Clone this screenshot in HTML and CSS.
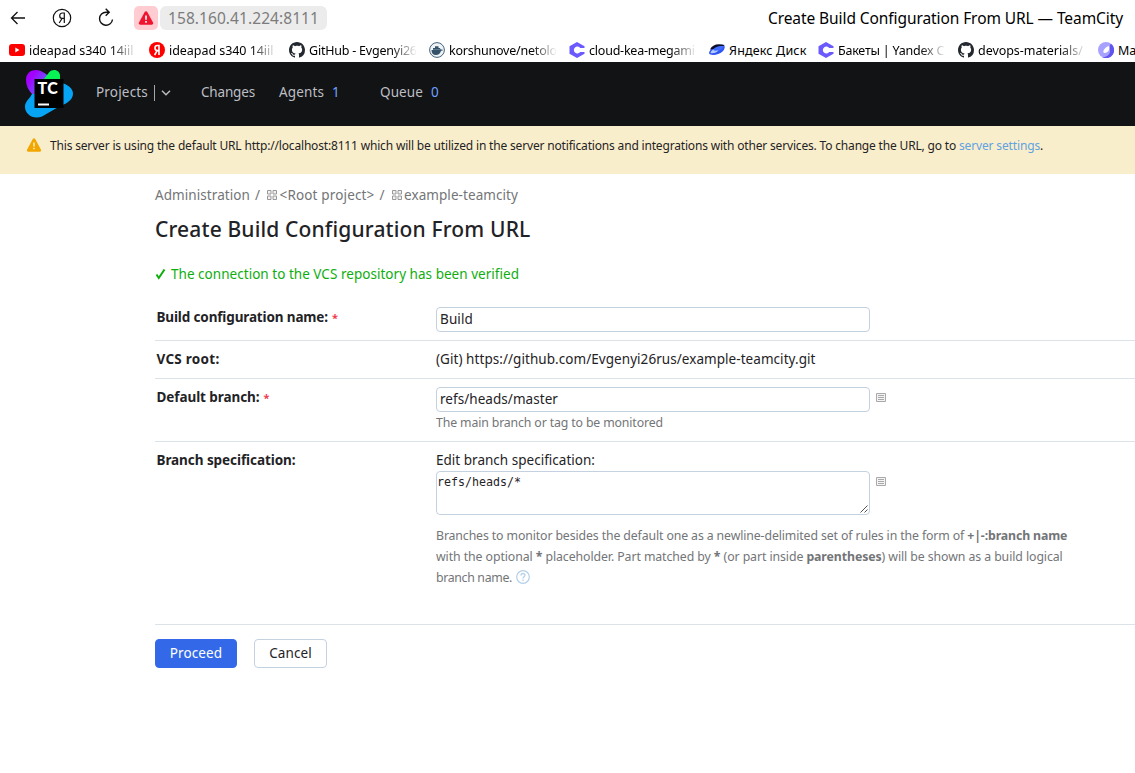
FILE: index.html
```html
<!DOCTYPE html>
<html lang="en">
<head>
<meta charset="utf-8">
<title>Create Build Configuration From URL — TeamCity</title>
<link rel="stylesheet" href="styles.css">
</head>
<body>
<svg class="defs" width="0" height="0">
  <symbol id="github" viewBox="0 0 16 16"><path fill="#24292f" d="M8 0C3.58 0 0 3.58 0 8c0 3.54 2.29 6.53 5.47 7.59.4.07.55-.17.55-.38 0-.19-.01-.82-.01-1.49-2.01.37-2.53-.49-2.69-.94-.09-.23-.48-.94-.82-1.13-.28-.15-.68-.52-.01-.53.63-.01 1.08.58 1.23.82.72 1.21 1.87.87 2.33.66.07-.52.28-.87.51-1.07-1.78-.2-3.64-.89-3.64-3.95 0-.87.31-1.59.82-2.15-.08-.2-.36-1.02.08-2.12 0 0 .67-.21 2.2.82.64-.18 1.32-.27 2-.27s1.36.09 2 .27c1.53-1.04 2.2-.82 2.2-.82.44 1.1.16 1.92.08 2.12.51.56.82 1.27.82 2.15 0 3.07-1.87 3.75-3.65 3.95.29.25.54.73.54 1.48 0 1.07-.01 1.93-.01 2.2 0 .21.15.46.55.38A8.01 8.01 0 0 0 16 8c0-4.42-3.58-8-8-8z"/></symbol>
  <symbol id="cloud" viewBox="0 0 16 16"><path fill="#6b5bff" d="M8 0l7.500 4.200V6h-4.300A3.500 3.500 0 1 0 11.200 10h4.300v1.800L8 16 .5 11.800V4.200z"/></symbol>
  <symbol id="project" viewBox="0 0 10 10"><path fill="#f2f2f2" stroke="#999" d="M.5.5h3.500v3.500h-3.500zM6 .5h3.500v3.500H6zM.5 6h3.500v3.500h-3.500zM6 6h3.500v3.500H6z"/></symbol>
  <symbol id="list" viewBox="0 0 10 9"><path fill="#f4f4f4" stroke="#a9a9a9" d="M.5.5h9v8h-9z"/><path stroke="#a9a9a9" d="M2 2.500h6M2 4.500h6M2 6.500h6"/></symbol>
</svg>

<div class="browser">
  <div class="toolbar">
    <svg class="back" width="16" height="14" viewBox="0 0 16 14"><path fill="none" stroke="#111" stroke-width="1.300" d="M15 7H1.500M7.500 1l-6 6 6 6"/></svg>
    <svg class="ya" width="20" height="20" viewBox="0 0 20 20"><g fill="none" stroke="#111"><circle cx="10" cy="10" r="8.700" stroke-width="1.200"/><path stroke-width="1.200" d="M12.300 15V5h-1.800C8.600 5 7.700 6.300 7.700 7.700c0 1.500.9 2.600 2.300 2.600h2.300M10.200 10.300L7.200 15"/></g></svg>
    <svg class="reload" width="18" height="20" viewBox="0 0 18 20"><path fill="none" stroke="#111" stroke-width="1.400" d="M15.500 11.500a6.500 6.500 0 1 1-6.500-7.300h3M8.700.8l3.500 3.400-3.500 3.500"/></svg>
    <span class="unsafe"><svg width="16" height="14" viewBox="0 0 16 14"><path fill="#f0142f" d="M6.700 1a1.500 1.500 0 0 1 2.600 0l5.700 10.500a1.500 1.500 0 0 1-1.300 2.200H2.300A1.500 1.500 0 0 1 1 11.500z"/><path stroke="#fff" stroke-width="1.600" d="M8 4.500v4.200M8 10v1.700"/></svg></span>
    <span class="address">158.160.41.224:8111</span>
    <span class="page-title">Create Build Configuration From URL — TeamCity</span>
  </div>
  <div class="bookmarks">
    <div class="bookmark"><svg width="16" height="16" viewBox="0 0 16 16"><rect y="2" width="16" height="12" rx="3" fill="#f00"/><path fill="#fff" d="M6.300 5.500v5L10.500 8z"/></svg><span class="mark fade">ideapad s340 14iil</span></div>
    <div class="bookmark"><svg width="16" height="16" viewBox="0 0 16 16"><circle cx="8" cy="8" r="8" fill="#f00"/><path fill="none" stroke="#fff" stroke-width="1.600" d="M10 13V3.500H8.300C6.800 3.500 6 4.500 6 6c0 1.600 1 2.600 2.400 2.600H10M8.200 8.600L5.600 13"/></svg><span class="mark fade">ideapad s340 14iil</span></div>
    <div class="bookmark"><svg width="16" height="16"><use href="#github"/></svg><span class="mark fade tight">GitHub - Evgenyi26</span></div>
    <div class="bookmark"><svg width="16" height="16" viewBox="0 0 16 16"><circle cx="8" cy="8" r="7.400" fill="#eef3f6" stroke="#47627a"/><path fill="#34536b" d="M2.500 8h8.300c.5 0 .7-.7.4-1.500.8.2 1 .8 1 1.200.7-.2 1.300 0 1.600.2-.4.7-1 .8-1.700.8-.8 2.800-2.600 4.300-5.200 4.300C4 13 2.500 11 2.500 8zM4 6h7v1.700H4zM6 4.200h3.500V6H6z"/></svg><span class="mark fade tight">korshunove/netolo</span></div>
    <div class="bookmark"><svg width="16" height="16"><use href="#cloud"/></svg><span class="mark fade tight">cloud-kea-megami</span></div>
    <div class="bookmark short"><svg width="16" height="16" viewBox="0 0 16 16"><path fill="#2f55f5" d="M0 11C1 6 9 2 14.500 3c2 .5 1.500 4-1 6.500-3.500 3.500-12.500 5-13.500 1.500z"/><path fill="#0b0d2a" d="M1 7.500C3 3 8 1 15.500 3 14 5 6 7 1 7.500z"/><path fill="#3f6bff" d="M3.500 9c1-3.500 6-5.500 11-5 .5 2.500-4 6-11 5z"/><path fill="#b5ccff" d="M1.500 11c0-1.500 1.500-3 3-3.500 0 1.500 3 1.500 5 .8-1.500 2.200-5 3.500-8 2.700z"/></svg><span class="mark disk">Яндекс Диск</span></div>
    <div class="bookmark"><svg width="16" height="16"><use href="#cloud"/></svg><span class="mark fade tight">Бакеты | Yandex C</span></div>
    <div class="bookmark"><svg width="16" height="16"><use href="#github"/></svg><span class="mark fade">devops-materials/</span></div>
    <div class="bookmark"><svg width="16" height="16" viewBox="0 0 16 16"><circle cx="8" cy="8" r="8" fill="#a8a2ff"/><path fill="#6254ee" d="M13 1.800A8 8 0 0 1 4 15c4 .5 8-2 8-6 0-3-1-5 1-7.200z"/><path fill="#fff" d="M11 4c1 4-1 7-5 7-2-2 1-6 5-7z"/></svg><span class="mark">Ma</span></div>
  </div>
</div>

<header class="header">
  <svg class="logo" width="50" height="50" viewBox="0 0 50 50">
    <defs><linearGradient id="violet" x1="0" y1="0" x2="1" y2=".5"><stop offset=".25" stop-color="#a400ff"/><stop offset="1" stop-color="#3a9bff"/></linearGradient></defs>
    <path fill="#07a4f5" d="M36 13.500C43 15 49 19 49 24.500c0 6-6 10-12 12L18 47.500C9 51 1 45 1 38c0-5 3-7 5.500-10.500L11 20z"/>
    <path fill="url(#violet)" d="M2 11C2 5 6 1 12 1c5 0 8 3 13 6l10 8-10 10H8C4 21 2 16 2 11z"/>
    <path fill="#08f454" d="M20 10l5-6.500c4-4.500 11-2.500 11 3.500v6L28 18z"/>
    <rect x="10.500" y="10" width="29" height="29" fill="#000"/>
    <path fill="#fff" d="M14 34.500h11v2H14z"/>
    <text class="logo-text" x="13.500" y="25.300">TC</text>
  </svg>
  <nav class="nav">
    <span class="nav-projects">Projects</span>
    <span class="divider"></span>
    <svg class="chevron" width="10" height="6" viewBox="0 0 10 6"><path fill="none" stroke="#bdbfc4" stroke-width="1.400" d="M1 .8l4 4 4-4"/></svg>
    <span class="nav-changes">Changes</span>
    <span class="nav-agents">Agents</span><span class="count count-agents">1</span>
    <span class="nav-queue">Queue</span><span class="count">0</span>
  </nav>
</header>

<div class="banner">
  <svg width="16" height="14" viewBox="0 0 16 14"><path fill="#f2a600" d="M6.800.9a1.400 1.400 0 0 1 2.400 0l5.800 10.800a1.400 1.400 0 0 1-1.200 2H2.200a1.400 1.400 0 0 1-1.200-2z"/><path stroke="#fff0c2" stroke-width="1.500" d="M8 4.500v4M8 9.700v1.600"/></svg>
  <span class="banner-text">This server is using the default URL http://localhost:8111 which will be utilized in the server notifications and integrations with other services. To change the URL, go to</span>
  <span class="banner-link">server settings</span><span class="banner-dot">.</span>
</div>

<main class="main">
  <div class="crumbs">
    <span class="crumb-admin">Administration</span><span class="slash">/</span>
    <svg class="crumb-icon" width="10" height="10"><use href="#project"/></svg><span class="crumb-root">&lt;Root project&gt;</span><span class="slash">/</span>
    <svg class="crumb-icon" width="10" height="10"><use href="#project"/></svg><span class="crumb-example">example-teamcity</span>
  </div>
  <h1 class="heading">Create Build Configuration From URL</h1>
  <div class="verified"><svg width="11" height="11" viewBox="0 0 11 11"><path fill="none" stroke="#0fae0f" stroke-width="2" d="M1.500 5.500l2.300 3.500L9.500.5"/></svg><span class="verified-text">The connection to the VCS repository has been verified</span></div>

  <div class="row row-name">
    <div class="label"><span class="label-name">Build configuration name:</span><span class="star">*</span></div>
    <div class="input value-build">Build</div>
  </div>
  <div class="row row-root">
    <div class="label label-root">VCS root:</div>
    <div class="value-root">(Git) https://github.com/Evgenyi26rus/example-teamcity.git</div>
  </div>
  <div class="row row-branch">
    <div class="label"><span class="label-branch">Default branch:</span><span class="star">*</span></div>
    <div>
      <div class="field"><div class="input value-branch">refs/heads/master</div><svg class="list" width="10" height="9"><use href="#list"/></svg></div>
      <div class="hint">The main branch or tag to be monitored</div>
    </div>
  </div>
  <div class="row row-spec">
    <div class="label label-spec">Branch specification:</div>
    <div>
      <div class="edit">Edit branch specification:</div>
      <div class="field"><div class="area"><span>refs/heads/*</span><svg class="grip" width="8" height="8" viewBox="0 0 8 8"><path stroke="#555" d="M.5 7.500l7-7M4.500 7.500l3-3"/></svg></div><svg class="list" width="10" height="9"><use href="#list"/></svg></div>
      <div class="rules">
        <div class="rules-one">Branches to monitor besides the default one as a newline-delimited set of rules in the form of <b>+|-:branch name</b></div>
        <div class="rules-two">with the optional <b>*</b> placeholder. Part matched by <b>*</b> (or part inside <b>parentheses</b>) will be shown as a build logical</div>
        <div class="rules-last"><span class="rules-three">branch name.</span><svg class="help" width="14" height="14" viewBox="0 0 14 14"><circle cx="7" cy="7" r="6.300" fill="none" stroke="#b4cfe9" stroke-width="1.200"/><path fill="none" stroke="#b4cfe9" stroke-width="1.300" d="M5 5.500c0-2.700 4-2.600 4-.2C9 6.800 7 6.800 7 8.500M7 9.600V11"/></svg></div>
      </div>
    </div>
  </div>
  <div class="actions">
    <button class="button primary">Proceed</button>
    <button class="button">Cancel</button>
  </div>
</main>
</body>
</html>
```
FILE: styles.css
```css
* { box-sizing: border-box; }
body {
  margin: 0;
  width: 1135px;
  height: 773px;
  overflow: hidden;
  background: #fff;
  color: #1f2326;
  font: 13.5px/20px "Noto Sans", sans-serif;
  white-space: nowrap;
}
svg { display: block; flex: none; }
.defs { position: absolute; }

/* Browser chrome */
.browser { height: 62px; color: #000; }
.toolbar { display: flex; align-items: center; height: 36px; padding: 0 12px 0 10px; }
.ya { margin-left: 26px; }
.reload { margin-left: 25px; }
.unsafe { display: flex; align-items: center; justify-content: center; width: 24px; height: 24px; margin-left: 19px; border-radius: 5px; background: #ffccd2; }
.address { height: 24px; width: 167px; margin-left: 2px; padding-left: 8px; border-radius: 6px; background: #ececec; color: #7c7c7c; font-size: 15.5px; line-height: 24px; letter-spacing: 0.073px; }
.page-title { margin-left: auto; font-size: 15.5px; letter-spacing: -0.085px; }
.bookmarks { display: flex; align-items: center; height: 28px; padding-left: 9px; font-size: 12.5px; overflow: hidden; }
.bookmark { display: flex; align-items: center; gap: 4px; flex: none; width: 140px; }
.bookmark.short { width: 109px; }
.mark { letter-spacing: -0.05px; line-height: 20px; padding-top: 1px; }
.disk { letter-spacing: 0.17px; }
.tight { letter-spacing: -0.22px; }
.fade { width: 108px; overflow: hidden; -webkit-mask-image: linear-gradient(to right, #000 76%, transparent); mask-image: linear-gradient(to right, #000 76%, transparent); }

/* Site header */
.header { display: flex; align-items: center; height: 64px; padding-left: 24px; background: #121315; }
.logo { margin-top: -1px; }
.logo-text { fill: #fff; font: 900 16px Lato, sans-serif; letter-spacing: 0.5px; }
.nav { display: flex; align-items: center; margin: -4px 0 0 22px; color: #bdbfc4; }
.nav-projects { width: 52px; letter-spacing: 0.18px; }
.divider { width: 1px; height: 16px; margin: 2px 7px 0 6px; background: #a4a6aa; }
.chevron { margin: 2px 30px 0 -1px; }
.nav-changes { width: 54px; margin-right: 24px; letter-spacing: -0.17px; }
.nav-agents { width: 45px; letter-spacing: 0.128px; }
.nav-queue { width: 43px; letter-spacing: 0.106px; }
.count { width: 8px; margin-left: 8px; color: #6fa0ff; }
.count-agents { margin-right: 40px; }

/* Warning banner */
.banner { display: flex; align-items: flex-start; height: 48px; padding: 12px 0 0 26px; background: #f9eecb; font-size: 12px; line-height: 16px; }
.banner-text { width: 906px; margin-left: 8px; letter-spacing: -0.174px; }
.banner-link { width: 81px; margin-left: 3px; color: #61a2e2; letter-spacing: -0.149px; }

/* Page */
.main { padding: 11px 0 0 155px; }
.crumbs { display: flex; align-items: center; height: 20px; color: #737577; }
.crumb-admin { width: 95px; letter-spacing: 0.075px; }
.crumb-root { width: 95px; letter-spacing: 0.157px; }
.crumb-example { letter-spacing: 0.072px; }
.crumb-icon { margin-right: 2.5px; }
.slash { width: 6px; margin: 0 6px 0 5px; }
.heading { margin: 10px 0 0; font-size: 21px; line-height: 28px; font-weight: 550; letter-spacing: 0.15px; }
.verified { display: flex; align-items: center; gap: 5px; height: 20px; margin-top: 21px; color: #0fae0f; }
.verified-text { letter-spacing: 0.032px; }

.row { display: grid; grid-template-columns: 281px 1fr; border-bottom: 1px solid #dbe2e8; }
.label { padding-left: 1.5px; font-weight: 700; }
.label-name { letter-spacing: -0.14px; }
.label-root { letter-spacing: 0.271px; }
.label-branch { letter-spacing: -0.075px; }
.label-spec { letter-spacing: -0.068px; }
.star { margin-left: 4px; color: #ef3b50; font-size: 11px; line-height: 16px; }
.row-name { height: 57px; padding-top: 23px; }
.row-root { height: 38px; padding-top: 8px; }
.row-branch { height: 63px; padding-top: 8px; }
.row-spec { height: 183px; padding-top: 8px; }
.input { width: 434px; height: 25px; padding-left: 3px; border: 1px solid #c3d1e0; border-radius: 4px; line-height: 23px; }
.value-build { letter-spacing: 0.122px; }
.value-root { letter-spacing: 0.055px; }
.value-branch { letter-spacing: 0.052px; }
.field { display: flex; align-items: flex-start; }
.list { margin: 6px 0 0 6px; }
.hint { font-size: 12.3px; color: #737577; line-height: 21px; letter-spacing: -0.135px; }
.edit { height: 21px; letter-spacing: 0.017px; }
.area { display: flex; justify-content: space-between; width: 434px; height: 44px; border: 1px solid #c3d1e0; border-radius: 4px; font: 11.63px/21px "DejaVu Sans Mono", monospace; }
.grip { align-self: flex-end; margin: 0 1px 1px 0; }
.rules { margin-top: 10px; color: #737577; font-size: 12.3px; line-height: 21px; }
.rules-one { letter-spacing: -0.118px; }
.rules-two { letter-spacing: -0.079px; }
.rules-three { letter-spacing: -0.32px; }
.rules-last { display: flex; align-items: center; gap: 4px; }
.help { margin-bottom: 1px; }

.actions { display: flex; gap: 17px; margin-top: 14px; }
.button { width: 73px; height: 29px; padding: 0 0 2px; border: 1px solid #c3d1e0; border-radius: 4px; background: #fff; color: #1f2326; font: inherit; letter-spacing: 0.1px; }
.primary { width: 82px; border-color: #3369e8; background: #3369e8; color: #fff; }
```
